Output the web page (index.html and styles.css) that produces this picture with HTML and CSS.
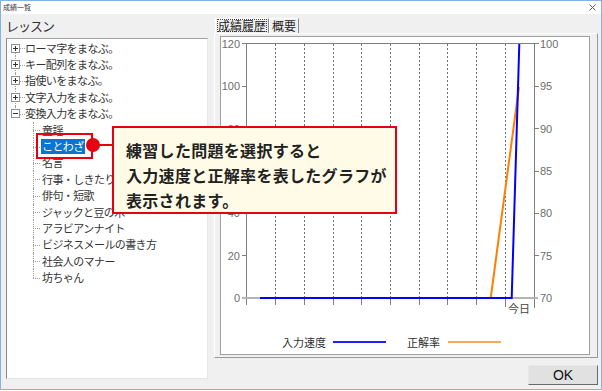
FILE: index.html
```html
<!DOCTYPE html>
<html lang="ja">
<head>
<meta charset="utf-8">
<title>成績一覧</title>
<link rel="stylesheet" href="styles.css">
</head>
<body>
<div class="window">
  <div class="titlebar">
    <span class="title">成績一覧</span>
    <svg class="close" width="7" height="7" viewBox="0 0 7 7"><path d="M0.5 0.5L6.5 6.5M6.5 0.5L0.5 6.5" stroke="#555" stroke-width="1"/></svg>
  </div>
  <div class="main">
    <div class="left">
      <div class="label">レッスン</div>
      <div class="tree">
        <div class="node top first"><svg class="exp" viewBox="0 0 9 9"><rect x=".5" y=".5" width="8" height="8" fill="#fff" stroke="#919191"/><path d="M2 4.5h5M4.5 2v5" stroke="#333"/></svg><span class="txt">ローマ字をまなぶ。</span></div>
        <div class="node top"><svg class="exp" viewBox="0 0 9 9"><rect x=".5" y=".5" width="8" height="8" fill="#fff" stroke="#919191"/><path d="M2 4.5h5M4.5 2v5" stroke="#333"/></svg><span class="txt">キー配列をまなぶ。</span></div>
        <div class="node top"><svg class="exp" viewBox="0 0 9 9"><rect x=".5" y=".5" width="8" height="8" fill="#fff" stroke="#919191"/><path d="M2 4.5h5M4.5 2v5" stroke="#333"/></svg><span class="txt">指使いをまなぶ。</span></div>
        <div class="node top"><svg class="exp" viewBox="0 0 9 9"><rect x=".5" y=".5" width="8" height="8" fill="#fff" stroke="#919191"/><path d="M2 4.5h5M4.5 2v5" stroke="#333"/></svg><span class="txt">文字入力をまなぶ。</span></div>
        <div class="node top last"><svg class="exp" viewBox="0 0 9 9"><rect x=".5" y=".5" width="8" height="8" fill="#fff" stroke="#919191"/><path d="M2 4.5h5" stroke="#333"/></svg><span class="txt">変換入力をまなぶ。</span></div>
        <div class="node child"><span class="txt">童謡</span></div>
        <div class="node child sel"><span class="txt">ことわざ</span></div>
        <div class="node child"><span class="txt">名言</span></div>
        <div class="node child"><span class="txt">行事・しきたり</span></div>
        <div class="node child"><span class="txt">俳句・短歌</span></div>
        <div class="node child"><span class="txt">ジャックと豆の木</span></div>
        <div class="node child"><span class="txt">アラビアンナイト</span></div>
        <div class="node child"><span class="txt">ビジネスメールの書き方</span></div>
        <div class="node child"><span class="txt">社会人のマナー</span></div>
        <div class="node child last"><span class="txt">坊ちゃん</span></div>
      </div>
    </div>
    <div class="right">
      <div class="tabs">
        <div class="tab active"><span class="focus">成績履歴</span></div>
        <div class="tab">概要</div>
      </div>
      <div class="panel">
        <div class="chart">
          <svg width="368" height="317" viewBox="221 37 368 317">
            <g stroke="#808080" stroke-width="1" fill="none">
              <path d="M246.5 43.5H534.5"/>
              <path d="M246.5 43.5V305"/>
              <path d="M534.5 43.5V308"/>
              <path d="M242 43.5h5M242 86.5h5M242 128.5h5M242 171.5h5M242 213.5h5M242 255.5h5"/>
              <path d="M534 43.5h5M534 86.5h5M534 128.5h5M534 171.5h5M534 213.5h5M534 255.5h5"/>
              <path d="M275.5 298v7M304.5 298v7M333.5 298v7M361.5 298v7M390.5 298v7M419.5 298v7M447.5 298v7M476.5 298v7M505.5 298v9"/>
            </g>
            <g stroke="#707070" stroke-width="1" stroke-dasharray="2 2">
              <path d="M275.5 44V297M304.5 44V297M333.5 44V297M361.5 44V297M390.5 44V297M419.5 44V297M447.5 44V297M476.5 44V297M505.5 44V297"/>
            </g>
            <path d="M242 298H538" stroke="#b4b4b4" stroke-width="2"/>
            <path d="M490.7 298L519 87" stroke="#ff8000" stroke-width="2" fill="none"/>
            <path d="M260 298H511.7L519.3 44" stroke="#0000ff" stroke-width="2" fill="none"/>
            <g class="ax" fill="#6d6d6d" text-anchor="end">
              <text x="240" y="48">120</text>
              <text x="240" y="90.3">100</text>
              <text x="240" y="132.7">80</text>
              <text x="240" y="175">60</text>
              <text x="240" y="217.3">40</text>
              <text x="240" y="259.7">20</text>
              <text x="240" y="302">0</text>
            </g>
            <g class="ax" fill="#6d6d6d">
              <text x="540" y="48">100</text>
              <text x="540" y="90.3">95</text>
              <text x="540" y="132.7">90</text>
              <text x="540" y="175">85</text>
              <text x="540" y="217.3">80</text>
              <text x="540" y="259.7">75</text>
              <text x="540" y="302">70</text>
            </g>
            <text class="jp" x="508" y="313" fill="#444">今日</text>
            <text class="jp" x="282" y="346.5" fill="#333">入力速度</text>
            <path d="M333 342H386" stroke="#2020ff" stroke-width="2"/>
            <text class="jp" x="407" y="346.5" fill="#333">正解率</text>
            <path d="M448 342H501" stroke="#ff8a20" stroke-width="1.5"/>
          </svg>
        </div>
      </div>
      <div class="footer"><button class="ok">OK</button></div>
    </div>
  </div>

  <div class="mark"></div>
  <div class="dot"></div>
  <div class="connector"></div>
  <div class="callout">練習した問題を選択すると<br>入力速度と正解率を表したグラフが<br>表示されます。</div>
</div>
</body>
</html>
```

FILE: styles.css
```css
* { box-sizing: border-box; margin: 0; padding: 0; }
html, body { width: 602px; height: 391px; background: #fff; overflow: hidden; }
body { font-family: "Noto Sans CJK JP", "Noto Sans", sans-serif; color: #222; }

.window {
  position: relative;
  width: 602px;
  height: 390px;
  border: 1px solid #84b3df;
  background: #f0f0f0;
  display: flex;
  flex-direction: column;
}
.titlebar {
  flex: none;
  height: 13px;
  background: #fff;
  display: flex;
  align-items: center;
  justify-content: space-between;
  padding: 0 5px 0 2px;
}
.title { font-size: 7px; line-height: 13px; color: #333; }
.close { display: block; }

.main {
  flex: 1;
  display: flex;
  gap: 6px;
  padding: 4px 2px 0 5px;
}
.left { width: 202px; display: flex; flex-direction: column; }
.label {
  height: 16px;
  line-height: 16px;
  font-size: 13px;
  letter-spacing: -1px;
  margin-bottom: 4px;
  color: #333;
}
.tree {
  height: 341px;
  background: #fff;
  border: 1px solid;
  border-color: #a0a0a0 #e6e6e6 #e6e6e6 #8a8a8a;
  padding-top: 1px;
  font-size: 11px;
  letter-spacing: -0.6px;
  color: #333;
}
.node {
  position: relative;
  height: 16.4px;
  display: flex;
  align-items: center;
  white-space: nowrap;
}
.txt { line-height: 15px; }
.top { padding-left: 4px; }
.exp { width: 9px; height: 9px; flex: none; margin-right: 5px; position: relative; z-index: 1; }
.top::before {
  content: "";
  position: absolute;
  left: 8px; top: 0; bottom: 0;
  border-left: 1px dotted #a0a0a0;
}
.top.first::before { top: 50%; }
.top.last::before { bottom: 50%; }
.top::after {
  content: "";
  position: absolute;
  left: 13px; top: 50%;
  width: 5px;
  border-top: 1px dotted #a0a0a0;
}
.child { padding-left: 35px; }
.child::before {
  content: "";
  position: absolute;
  left: 26px; top: 0; bottom: 0;
  border-left: 1px dotted #a0a0a0;
}
.child.last::before { bottom: 50%; }
.child::after {
  content: "";
  position: absolute;
  left: 26px; top: 50%;
  width: 7px;
  border-top: 1px dotted #a0a0a0;
}
.sel .txt {
  background: #0a74d6;
  color: #fff;
  margin-left: -1px;
  padding: 0 1px;
}

.right { width: 384px; display: flex; flex-direction: column; }
.tabs { height: 15px; display: flex; align-items: flex-end; position: relative; z-index: 1; }
.tab {
  height: 15px;
  font-size: 12px;
  line-height: 13px;
  padding: 0 2px;
  border-top: 1px solid #fff;
  border-left: 1px solid #fff;
  border-right: 1px solid #8a8a8a;
  color: #222;
}
.tab.active { margin-left: 1px; padding: 0 1px; }
.focus { display: block; border: 1px dotted #444; line-height: 11px; height: 13px; }
.panel {
  height: 325px;
  border: 1px solid;
  border-color: #fff #9a9a9a #9a9a9a #fff;
  padding: 2px 7px 2px 5px;
}
.chart {
  height: 319px;
  background: #fff;
  border: 1px solid #a0a0a0;
}
.chart svg { display: block; }
.ax { font-family: "Liberation Sans", Arial, sans-serif; font-size: 11px; }
.jp { font-family: "Noto Sans CJK JP", sans-serif; font-size: 11px; }

.footer { display: flex; justify-content: flex-end; margin-top: 7px; }
.ok {
  width: 70px;
  height: 20px;
  background: #e1e1e1;
  border: 1px solid;
  border-color: #e8e8e8 #6a6a6a #6a6a6a #e8e8e8;
  font-family: "Liberation Sans", Arial, sans-serif;
  font-size: 14px;
  color: #111;
}

/* annotation overlay */
.mark {
  position: absolute;
  left: 35px; top: 132px;
  width: 57px; height: 26px;
  border: 2px solid #e60012;
}
.dot {
  position: absolute;
  left: 85px; top: 137px;
  width: 14px; height: 14px;
  border-radius: 50%;
  background: #e60012;
}
.connector {
  position: absolute;
  left: 98px; top: 143px;
  width: 14px; height: 2px;
  background: #e60012;
}
.callout {
  position: absolute;
  left: 111px; top: 125px;
  width: 285px; height: 88px;
  border: 2px solid #e60012;
  background: #fffbe6;
  padding: 10px 0 0 12px;
  font-size: 16px;
  line-height: 25px;
  font-weight: 700;
  letter-spacing: 0.3px;
  color: #222;
  white-space: nowrap;
}
```
